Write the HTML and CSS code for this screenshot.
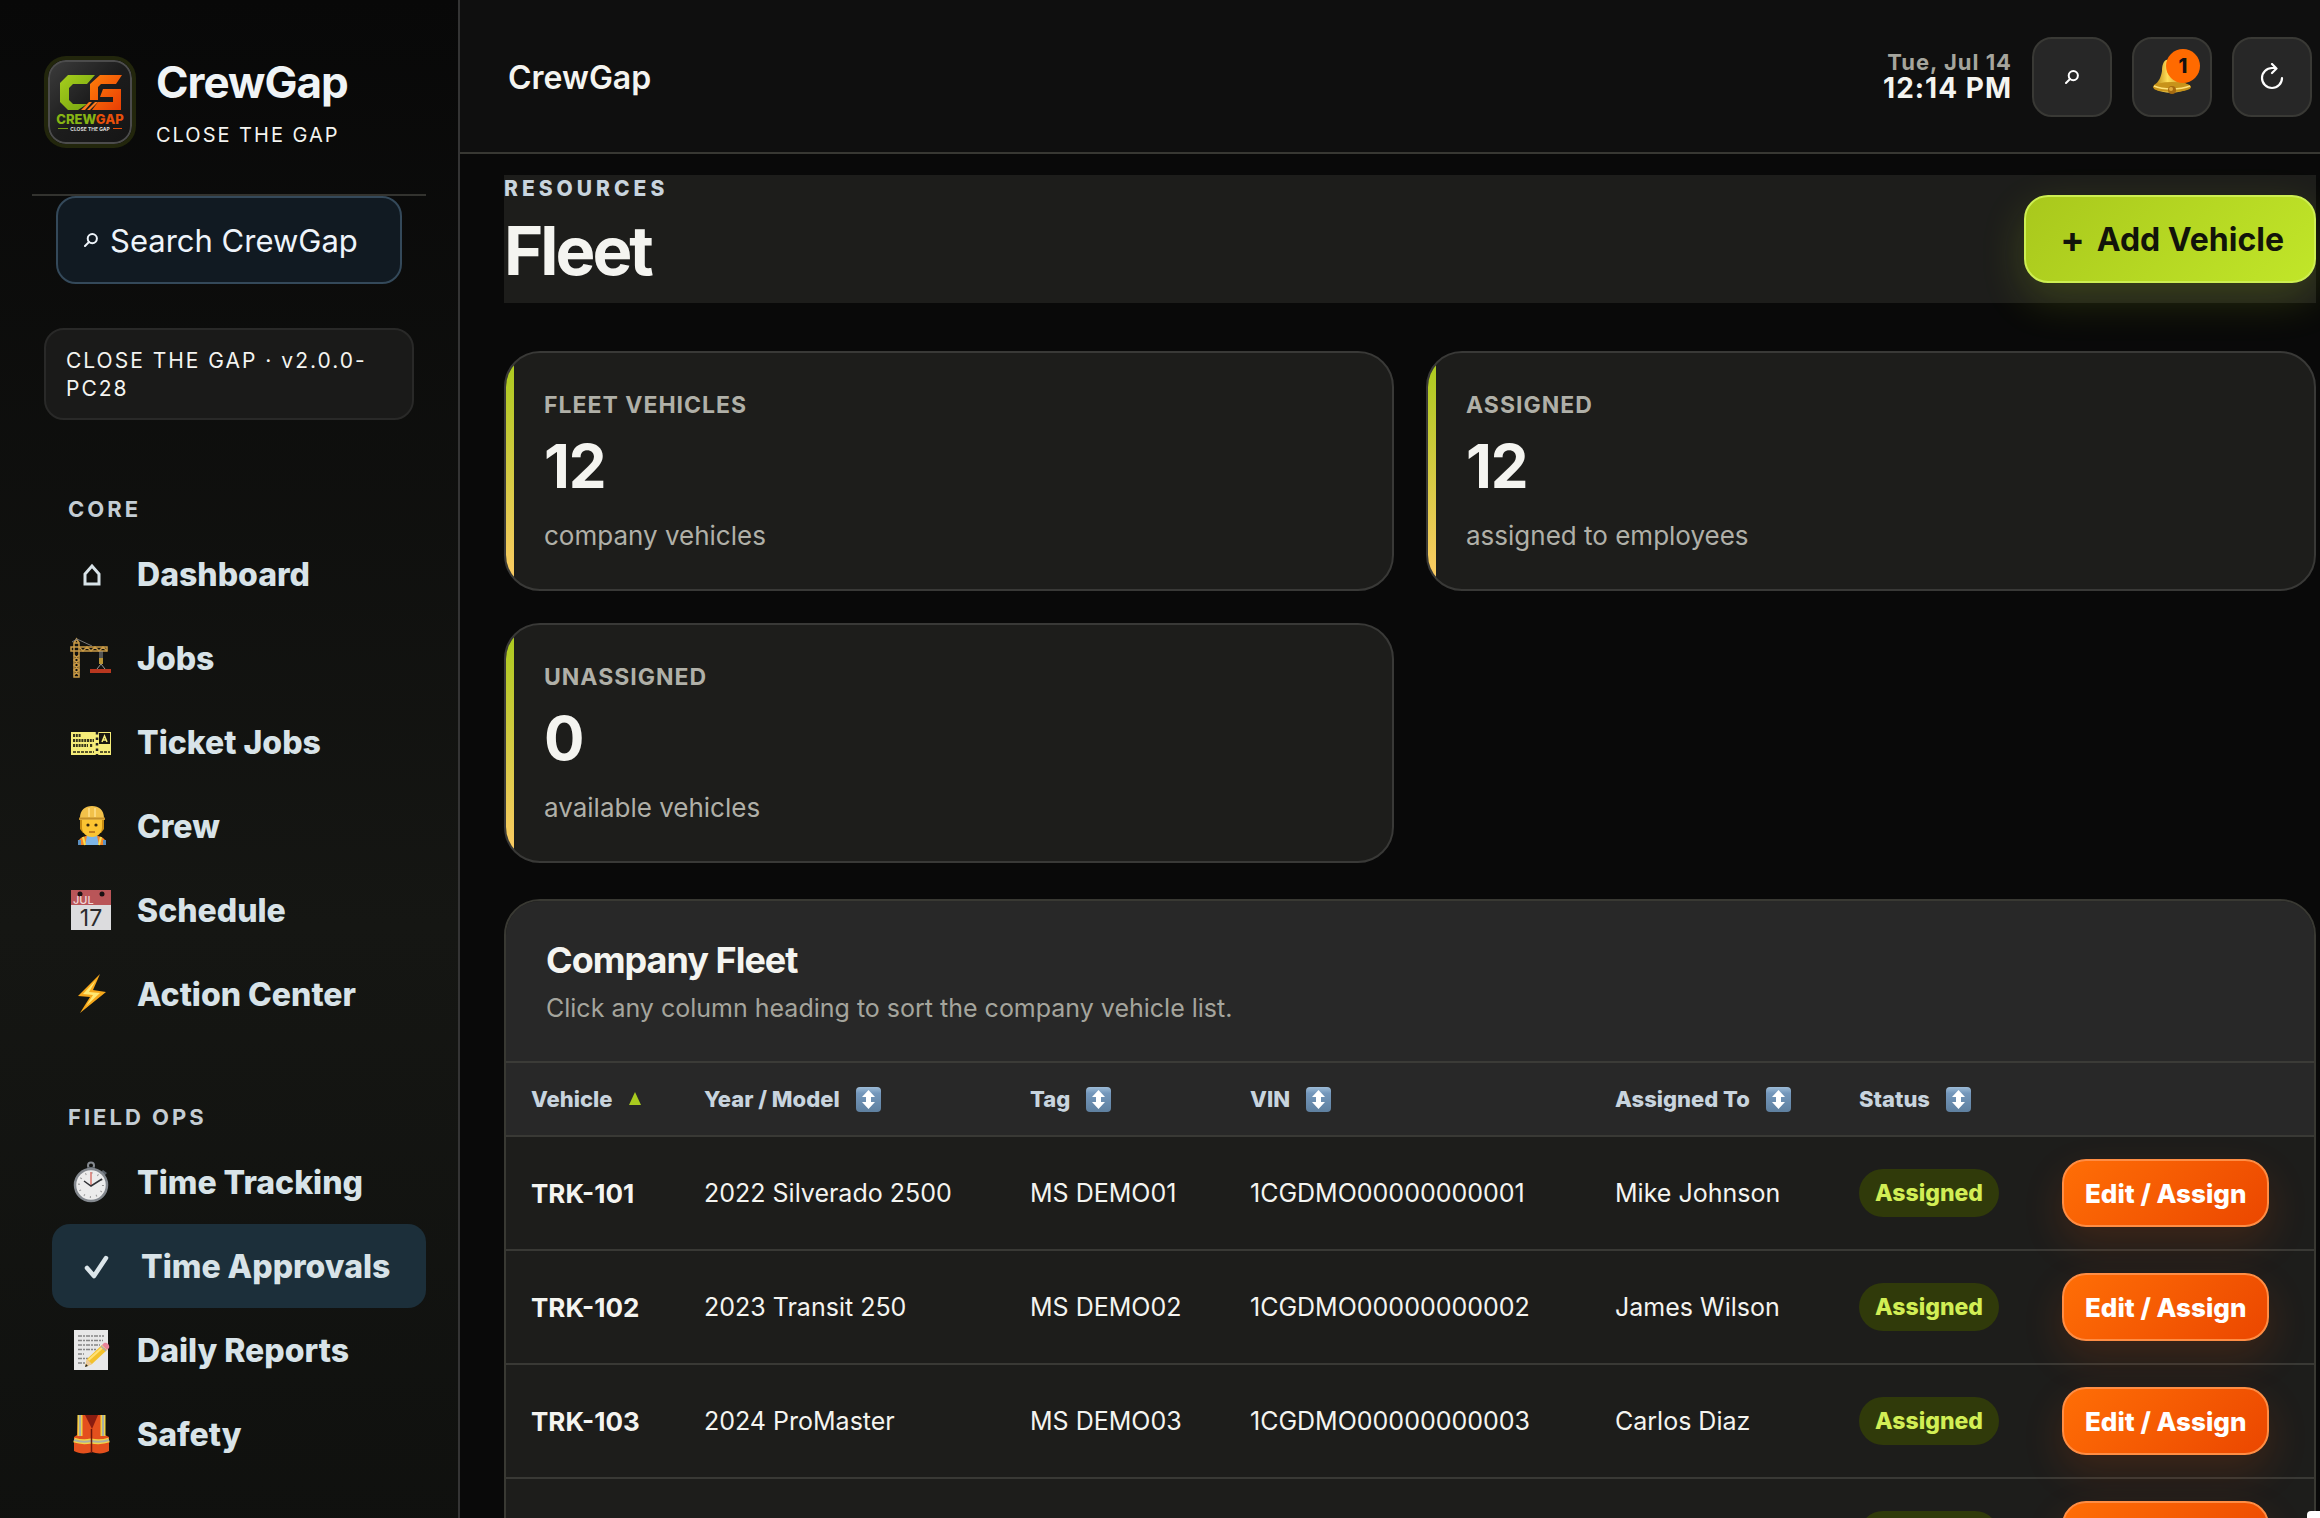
FILE: index.html
```html
<!DOCTYPE html>
<html lang="en">
<head>
<meta charset="utf-8">
<meta name="viewport" content="width=device-width, initial-scale=1">
<title>CrewGap – Fleet</title>
<link rel="stylesheet" href="styles.css">
</head>
<body>
<svg class="defs" aria-hidden="true">
  <defs>
    <linearGradient id="lime" x1="0" y1="0" x2="1" y2="1"><stop offset="0" stop-color="#a6cf1c"/><stop offset="1" stop-color="#74a010"/></linearGradient>
    <linearGradient id="orange" x1="0" y1="0" x2="1" y2="1"><stop offset="0" stop-color="#ff7f0a"/><stop offset="1" stop-color="#e83c04"/></linearGradient>
    <linearGradient id="slate" x1="0" y1="0" x2="1" y2="1"><stop offset="0" stop-color="#3c3c3c"/><stop offset=".5" stop-color="#1c1c1c"/><stop offset="1" stop-color="#151515"/></linearGradient>
    <linearGradient id="gold" x1="0" y1="0" x2="1" y2="0"><stop offset="0" stop-color="#b07c0c"/><stop offset=".4" stop-color="#ffdf5a"/><stop offset="1" stop-color="#b57a10"/></linearGradient>
    <linearGradient id="sortblue" x1="0" y1="0" x2="0" y2="1"><stop offset="0" stop-color="#9dbcd8"/><stop offset=".25" stop-color="#7497bb"/><stop offset="1" stop-color="#5f809f"/></linearGradient>
    <symbol id="sort" viewBox="0 0 25 25">
      <rect width="25" height="25" rx="4" fill="url(#sortblue)"/>
      <path d="M12.500 3l6.500 7h-4v5h4l-6.500 7L6 15h4v-5H6z" fill="#fff"/>
    </symbol>
    <symbol id="glass" viewBox="0 0 14 14">
      <circle cx="8.300" cy="5.600" r="4.600" fill="none" stroke="currentColor" stroke-width="2"/>
      <path d="M5 9L1 13" stroke="currentColor" stroke-width="2" stroke-linecap="round"/>
    </symbol>
  </defs>
</svg>
<div class="app">
  <aside class="sidebar">
    <div class="brand">
      <svg class="logo" viewBox="0 0 84 84" role="img" aria-label="CrewGap logo">
        <rect x="1" y="1" width="82" height="82" rx="17" fill="url(#slate)" stroke="#4c4c4c" stroke-width="2"/>
        <path d="M20 15h27l-8 9H25l-4 4v12l4 4h14l-9 6H20l-8-8V23z" fill="url(#lime)"/>
        <path d="M52 15h22l-6 9H53l-3 3v13h-8V24zM55 29h18v21H44l6-8h15v-5H52z" fill="url(#orange)"/>
        <path d="M33 50l8-8h3l-7 8zM39 50l8-8h3l-8 8z" fill="#ff7a1c"/>
        <text class="logo-name" x="42" y="64" text-anchor="middle" fill="#86b414">CREW<tspan fill="#e8500a">GAP</tspan></text>
        <path d="M10 68.500h10" stroke="#76a010"/><path d="M65 68.500h9" stroke="#e8500a"/>
        <text class="logo-tag" x="42" y="70.500" text-anchor="middle" fill="#ddd">CLOSE THE GAP</text>
      </svg>
      <div class="brand-text">
        <strong class="brand-name">CrewGap</strong>
        <span class="brand-tag">CLOSE THE GAP</span>
      </div>
    </div>
    <button class="search" type="button"><svg class="glass"><use href="#glass"/></svg>Search CrewGap</button>
    <div class="version">CLOSE THE GAP · v2.0.0-PC28</div>
    <nav class="nav" aria-label="Main">
      <h2 class="nav-label">CORE</h2>
      <a class="nav-item" href="#dashboard"><svg class="nav-icon" viewBox="0 0 40 40"><path d="M14 30V20l7-8 7 8v10z" fill="none" stroke="#d8e3e8" stroke-width="3"/></svg>Dashboard</a>
      <a class="nav-item" href="#jobs"><svg class="nav-icon" viewBox="0 0 40 40">
        <g fill="none" stroke="#c99a46" stroke-width="1.500"><path d="M3 39V5h5v34zM0 9h36v4H0zM3 5l2.500-4L8 5"/><path d="M3 17l5 5-5 5 5 5-5 5M8 17l-5 5 5 5-5 5 5 5M8 9l4 4 4-4 4 4 4-4 4 4 4-4 4 4"/></g>
        <path d="M6 1L1 4M6 1l15 7" stroke="#777" stroke-width="1"/><path d="M29 13v9M31 13v9M30 26l-4 5M30 26l4 5" stroke="#999" stroke-width="1"/><path d="M28 20h4v6h-4z" fill="#b99435"/><path d="M19 31h21v4H19z" fill="#b8371f"/></svg>Jobs</a>
      <a class="nav-item" href="#tickets"><svg class="nav-icon" viewBox="0 0 40 40">
        <path d="M0 10h40v23H0z" fill="#f5ec79"/><path d="M28 11h11v11H28z" fill="#17160f"/><path d="M31 20l2.500-6 2.500 6M32 18h3" fill="none" stroke="#f5ec79" stroke-width="1.500"/>
        <path d="M26 10v23" stroke="#222" stroke-width="2.500" stroke-dasharray="2.500 3"/><path d="M2 13.500h8M2 18.500h21M2 23.500h15M19 23.500h3" stroke="#38361b" stroke-width="3" stroke-dasharray="2 .8"/><path d="M2 30h21M29 30h10" stroke="#5a562a" stroke-width="1.800" stroke-dasharray="3 1"/></svg>Ticket Jobs</a>
      <a class="nav-item" href="#crew"><svg class="nav-icon" viewBox="0 0 40 40">
        <path d="M7 39c0-6 3-8 8-9h12c5 1 8 3 8 9z" fill="#f4862a"/><path d="M16 30h10l2 9H14z" fill="#7db5e6"/><path d="M12 31l2 8M30 31l-2 8" stroke="#f8e04b" stroke-width="2"/><path d="M7 34h3v5H7zM32 34h3v5h-3z" fill="#5a8fc0"/>
        <path d="M9 14h24v9l-3 4H12l-3-4z" fill="#c88c12"/><path d="M11 13h20v8c0 6-4 10-10 10s-10-4-10-10z" fill="#fcc432"/><circle cx="17" cy="19" r="1.600" fill="#3a2a10"/><circle cx="25" cy="19" r="1.600" fill="#3a2a10"/><path d="M18 26h6" stroke="#b06a17" stroke-width="1.500"/>
        <path d="M9 12C9 4 14 0 21 0s12 4 12 12l1 2H8z" fill="#f2c14a"/><path d="M8 12.500h26" stroke="#c5902a" stroke-width="2"/><path d="M18 2v9M24 2v9" stroke="#ffe08a" stroke-width="1.500"/></svg>Crew</a>
      <a class="nav-item" href="#schedule"><svg class="nav-icon" viewBox="0 0 40 40">
        <path d="M0 0h40v40H0z" fill="#dcdcde"/><path d="M0 0h40v15H0z" fill="#b95558"/><circle cx="9" cy="4" r="2.500" fill="#181012"/><circle cx="31" cy="4" r="2.500" fill="#181012"/>
        <text class="cal-month" x="2" y="14" fill="#f0d8d8">JUL</text><text class="cal-day" x="20" y="36" text-anchor="middle" fill="#2b2b2d">17</text></svg>Schedule</a>
      <a class="nav-item" href="#actions"><svg class="nav-icon" viewBox="0 0 40 40"><path d="M29 0L7 22l12 1L9 39l26-21-13-2z" fill="#f7a81b"/><path d="M25 6L12 20l10 1-7 11 14-13-11-1z" fill="#ffe873"/></svg>Action Center</a>

      <h2 class="nav-label nav-label-next">FIELD OPS</h2>
      <a class="nav-item" href="#time"><svg class="nav-icon" viewBox="0 0 40 40">
        <circle cx="20" cy="3.500" r="3" fill="none" stroke="#858a90" stroke-width="2"/><path d="M17 5h6v4h-6zM32 8l4 3-3 3-3-4z" fill="#596068"/><circle cx="20" cy="23" r="16" fill="#ececec" stroke="#83888e" stroke-width="2.500"/>
        <circle cx="20" cy="23" r="12" fill="none" stroke="#999" stroke-width="2" stroke-dasharray="1 5.300"/><path d="M20 24V10" stroke="#d9766e" stroke-width="1.500"/><path d="M13 19l7 5 11-7" fill="none" stroke="#303236" stroke-width="1.500"/></svg>Time Tracking</a>
      <a class="nav-item active" href="#approvals"><svg class="nav-icon" viewBox="0 0 40 40"><path d="M12 22l7 8L31 12" fill="none" stroke="#dce6ea" stroke-width="4.500" stroke-linecap="round" stroke-linejoin="round"/></svg>Time Approvals</a>
      <a class="nav-item" href="#reports"><svg class="nav-icon" viewBox="0 0 40 40">
        <path d="M3 0h34v40H3z" fill="#e8e8e8"/><path d="M7 6h26M7 10.500h25M7 15h22M7 19.500h18M7 24h6M7 28.500h10M7 33h7" stroke="#858585" stroke-width="1.500" stroke-dasharray="4 1 2 1"/>
        <path d="M14 37l2-8 15-14 5 5-15 14z" fill="#f3c12c"/><path d="M17.500 30l15-13.500" stroke="#ffe278" stroke-width="2"/><path d="M14 37l2-8 5 5z" fill="#ecca98"/><path d="M14 37l1-3 2 2z" fill="#222"/><path d="M31 15l2-2c3-1 6 2 5 5l-2 2z" fill="#e8849a"/><path d="M30 16l5 5" stroke="#aaa" stroke-width="1.500"/></svg>Daily Reports</a>
      <a class="nav-item" href="#safety"><svg class="nav-icon" viewBox="0 0 40 40">
        <path d="M7 1h26l1 20 4 2v14c-5 3-12 3-17 1-6 2-13 2-18-1V23l3-2z" fill="#e4501d"/><path d="M14 1h13l-6 14z" fill="#8a1c10"/><path d="M9 1v21M32 1v21M3 26c6 2 12 2 17 1 6 1 12 1 18-1" fill="none" stroke="#f0d347" stroke-width="5"/><path d="M9 1v21M32 1v21M3 26c6 2 12 2 17 1 6 1 12 1 18-1" fill="none" stroke="#aab0a4" stroke-width="2"/><path d="M20.500 15v24" stroke="#6d170c" stroke-width="1.500"/></svg>Safety</a>
    </nav>
  </aside>

  <div class="content">
    <header class="topbar">
      <div class="topbar-title">CrewGap</div>
      <div class="clock"><span class="clock-date">Tue, Jul 14</span><span class="clock-time">12:14 PM</span></div>
      <button class="tool" type="button" aria-label="Search"><svg class="glass"><use href="#glass"/></svg></button>
      <button class="tool" type="button" aria-label="Notifications">
        <svg class="bell" viewBox="0 0 40 40"><path d="M14 3c8-1 14 3 14 12 0 6 3 10 8 13v4c-10 5-24 5-34 0v-4c5-3 7-8 8-14 0-5 1-9 4-11z" fill="url(#gold)"/><ellipse cx="20" cy="30" rx="19" ry="5" fill="#c8931a"/><path d="M2 29c9 4 26 4 36 0" fill="none" stroke="#ffe278" stroke-width="1.500"/><circle cx="20" cy="33" r="4" fill="#a66a10"/><circle cx="19" cy="32" r="2" fill="#e2a93a"/></svg>
        <span class="badge">1</span>
      </button>
      <button class="tool" type="button" aria-label="Refresh"><svg class="refresh" viewBox="0 0 28 28"><path d="M24 15a10 10 0 1 1-10-10h4M14 1l4.500 4.500L14 10" fill="none" stroke="#fff" stroke-width="2.200" stroke-linecap="round" stroke-linejoin="round"/></svg></button>
    </header>

    <main class="main">
      <section class="page-head">
        <div class="page-title">
          <p class="eyebrow">RESOURCES</p>
          <h1>Fleet</h1>
        </div>
        <button class="add" type="button"><span class="plus">+</span>Add Vehicle</button>
      </section>

      <section class="stats">
        <article class="stat"><h3>FLEET VEHICLES</h3><strong>12</strong><p>company vehicles</p></article>
        <article class="stat"><h3>ASSIGNED</h3><strong>12</strong><p>assigned to employees</p></article>
        <article class="stat"><h3>UNASSIGNED</h3><strong>0</strong><p>available vehicles</p></article>
      </section>

      <section class="panel">
        <header class="panel-head">
          <h2>Company Fleet</h2>
          <p>Click any column heading to sort the company vehicle list.</p>
        </header>
        <table class="fleet">
          <colgroup><col class="c-vehicle"><col class="c-model"><col class="c-tag"><col class="c-vin"><col class="c-assigned"><col class="c-status"><col></colgroup>
          <thead>
            <tr>
              <th scope="col"><button type="button">Vehicle <svg class="asc" viewBox="0 0 14 14"><path d="M7 0l6 13H1z" fill="#a9cb1f"/></svg></button></th>
              <th scope="col"><button type="button">Year / Model <svg class="sort"><use href="#sort"/></svg></button></th>
              <th scope="col"><button type="button">Tag <svg class="sort"><use href="#sort"/></svg></button></th>
              <th scope="col"><button type="button">VIN <svg class="sort"><use href="#sort"/></svg></button></th>
              <th scope="col"><button type="button">Assigned To <svg class="sort"><use href="#sort"/></svg></button></th>
              <th scope="col"><button type="button">Status <svg class="sort"><use href="#sort"/></svg></button></th>
              <th scope="col" aria-label="Actions"></th>
            </tr>
          </thead>
          <tbody>
            <tr><td><b>TRK-101</b></td><td>2022 Silverado 2500</td><td>MS DEMO01</td><td>1CGDMO00000000001</td><td>Mike Johnson</td><td><span class="pill">Assigned</span></td><td><button class="edit" type="button">Edit / Assign</button></td></tr>
            <tr><td><b>TRK-102</b></td><td>2023 Transit 250</td><td>MS DEMO02</td><td>1CGDMO00000000002</td><td>James Wilson</td><td><span class="pill">Assigned</span></td><td><button class="edit" type="button">Edit / Assign</button></td></tr>
            <tr><td><b>TRK-103</b></td><td>2024 ProMaster</td><td>MS DEMO03</td><td>1CGDMO00000000003</td><td>Carlos Diaz</td><td><span class="pill">Assigned</span></td><td><button class="edit" type="button">Edit / Assign</button></td></tr>
            <tr><td></td><td></td><td></td><td></td><td></td><td><span class="pill">Assigned</span></td><td><button class="edit" type="button">Edit / Assign</button></td></tr>
          </tbody>
        </table>
      </section>
    </main>
  </div>
</div>
<div class="corner" aria-hidden="true"></div>
</body>
</html>
```
FILE: styles.css
```css
* { box-sizing: border-box; }

html, body { height: 100%; }

body {
  margin: 0;
  overflow: hidden;
  background: #090909;
  color: #f4f4f0;
  font-family: Inter, "Liberation Sans", sans-serif;
  font-size: 25px;
}

h1, h2, h3, p { margin: 0; }
button { font: inherit; color: inherit; cursor: pointer; }
.defs { position: absolute; width: 0; height: 0; }

.app {
  display: grid;
  grid-template-columns: 460px minmax(0, 1fr);
  height: 100vh;
  overflow: hidden;
}

/* Sidebar */
.sidebar {
  display: flex;
  flex-direction: column;
  overflow: hidden;
  padding: 0 32px;
  border-right: 2px solid #343434;
  background: linear-gradient(180deg, #080808 0%, #151613 58%, #0f100e 100%);
}

.brand {
  display: flex;
  flex: none;
  gap: 24px;
  height: 196px;
  padding: 60px 0 0 16px;
  border-bottom: 2px solid #33332f;
}

.logo {
  flex: none;
  width: 84px;
  height: 84px;
  border-radius: 18px;
  box-shadow: 0 0 0 4px #22260c;
}
.logo-name { font-size: 13px; font-weight: 800; }
.logo-tag { font-size: 5px; font-weight: 700; }

.brand-text { display: flex; flex-direction: column; gap: 12px; }
.brand-name { font-size: 44px; line-height: 44px; font-weight: 700; letter-spacing: -1px; color: #f0f4f6; }
.brand-tag { font-size: 20px; line-height: 38px; letter-spacing: 2px; }

.search {
  display: flex;
  flex: none;
  align-items: center;
  gap: 12px;
  height: 88px;
  margin: 0 24px;
  padding: 0 26px;
  border: 2px solid #34495a;
  border-radius: 20px;
  background: #111a22;
  color: #eef4fa;
  font-size: 31px;
}
.glass { width: 14px; height: 14px; }

.version {
  flex: none;
  margin: 44px 12px 0;
  padding: 17px 20px 15px;
  border: 2px solid #292928;
  border-radius: 20px;
  background: #1a1a19;
  font-size: 21px;
  line-height: 28px;
  letter-spacing: 2px;
}

.nav { display: flex; flex-direction: column; padding: 73px 0 0 20px; }
.nav-label {
  padding-left: 16px;
  font-size: 22px;
  line-height: 32px;
  font-weight: 700;
  letter-spacing: 3px;
  color: #c4cdd4;
  margin-bottom: 7px;
}
.nav-label-next { margin-top: 65px; }
.nav-item {
  display: flex;
  flex: none;
  align-items: center;
  gap: 26px;
  height: 84px;
  padding-left: 19px;
  border-radius: 18px;
  color: #d8e3e8;
  font-size: 32px;
  font-weight: 800;
  text-decoration: none;
  white-space: nowrap;
}
.nav-item.active { padding-left: 23px; background: #1c2f3a; }
.nav-icon { flex: none; width: 40px; height: 40px; overflow: visible; }
.cal-month { font-size: 11px; font-weight: 500; }
.cal-day { font-size: 23px; font-weight: 400; }

/* Top bar */
.content { display: flex; flex-direction: column; min-width: 0; }
.topbar {
  display: flex;
  flex: none;
  align-items: center;
  gap: 20px;
  height: 154px;
  padding: 2px 8px 0 48px;
  border-bottom: 2px solid #383833;
  background: #0f0f0f;
}
.topbar-title { flex: 1; font-size: 32px; font-weight: 600; }
.clock { display: flex; flex-direction: column; align-items: flex-end; padding-bottom: 4px; line-height: 26px; font-weight: 700; }
.clock-date { font-size: 22px; letter-spacing: 1px; color: #a5a59d; }
.clock-time { font-size: 28px; letter-spacing: 1px; }
.tool {
  position: relative;
  display: grid;
  place-items: center;
  flex: none;
  width: 80px;
  height: 80px;
  padding: 0;
  border: 2px solid #393935;
  border-radius: 20px;
  background: #272727;
  color: #fff;
}
.bell { width: 40px; height: 40px; }
.refresh { width: 28px; height: 28px; }
.badge {
  position: absolute;
  top: 10px;
  right: 10px;
  width: 34px;
  height: 34px;
  border-radius: 50%;
  background: #ff6a00;
  color: #111;
  font-size: 20px;
  line-height: 34px;
  font-weight: 800;
}

/* Page */
.main { padding: 21px 4px 0 44px; }
.page-head {
  display: flex;
  align-items: center;
  justify-content: space-between;
  height: 128px;
  background: #1d1d1b;
}
.page-title { display: flex; flex-direction: column; height: 100%; }
.eyebrow { font-size: 21px; line-height: 28px; font-weight: 800; letter-spacing: 4px; color: #c8d4de; }
h1 { font-size: 67px; line-height: 96px; font-weight: 700; letter-spacing: -3px; }
.add {
  display: flex;
  align-items: center;
  gap: 12px;
  height: 88px;
  padding: 0 30px 0 34px;
  border: 2px solid #cdee52;
  border-radius: 24px;
  background: linear-gradient(135deg, #a9c81c, #c1e629);
  box-shadow: 0 16px 44px rgba(178, 214, 32, .2);
  color: #12140a;
  font-size: 32px;
  font-weight: 700;
}
.plus { font-size: 36px; line-height: 36px; }

.stats {
  display: grid;
  grid-template-columns: 1fr 1fr;
  gap: 32px;
  margin-top: 48px;
}
.stat {
  position: relative;
  overflow: hidden;
  height: 240px;
  padding: 36px 38px;
  border: 2px solid #393937;
  border-radius: 36px;
  background: #1d1d1b;
}
.stat::before {
  content: "";
  position: absolute;
  inset: 0 auto 0 0;
  width: 8px;
  background: linear-gradient(180deg, #a8ca1c, #ffcb67);
}
.stat h3 { font-size: 23px; line-height: 32px; font-weight: 700; letter-spacing: 1px; color: #b0b0a8; }
.stat strong { display: block; margin-top: 9px; font-size: 60px; line-height: 72px; font-weight: 700; letter-spacing: -1px; }
.stat p { margin-top: 18px; font-size: 26px; line-height: 32px; color: #b0b0a8; }

.panel {
  overflow: hidden;
  margin-top: 36px;
  border: 2px solid #393933;
  border-radius: 36px;
  background: #1d1d1b;
}
.panel-head {
  height: 162px;
  padding: 37px 40px 0;
  border-bottom: 2px solid #3b3b37;
  background: #282828;
}
.panel-head h2 { font-size: 36px; line-height: 44px; font-weight: 700; letter-spacing: -1px; }
.panel-head p { margin-top: 10px; line-height: 32px; color: #a5a59d; }

.fleet { width: 100%; table-layout: fixed; border-collapse: separate; border-spacing: 0; text-align: left; }
.c-vehicle { width: 173px; }
.c-model { width: 326px; }
.c-tag { width: 220px; }
.c-vin { width: 365px; }
.c-assigned { width: 244px; }
.c-status { width: 203px; }
.fleet th, .fleet td { padding: 0 0 0 25px; border-bottom: 2px solid #393935; white-space: nowrap; }
.fleet th { height: 74px; background: #282828; color: #c8d4de; }
.fleet th button {
  display: flex;
  align-items: center;
  gap: 16px;
  padding: 0;
  border: 0;
  background: none;
  font-size: 22px;
  font-weight: 800;
}
.fleet td { height: 114px; }
.fleet b { font-size: 26px; font-weight: 700; }
.sort { width: 25px; height: 25px; }
.asc { width: 14px; height: 14px; }
.pill {
  display: inline-block;
  padding: 0 16px;
  border-radius: 24px;
  background: #303a0a;
  color: #d2ee55;
  font-size: 23px;
  line-height: 48px;
  font-weight: 800;
}
.edit {
  height: 68px;
  padding: 0 21px;
  border: 2px solid #ff8d44;
  border-radius: 24px;
  background: linear-gradient(135deg, #ff6e06, #eb4700);
  box-shadow: 0 16px 40px rgba(255, 90, 0, .15);
  color: #fff;
  font-size: 26px;
  font-weight: 800;
}

.corner {
  position: fixed;
  right: 0;
  bottom: 0;
  width: 13px;
  height: 7px;
  border-top-left-radius: 4px;
  background: #fff;
}
```
